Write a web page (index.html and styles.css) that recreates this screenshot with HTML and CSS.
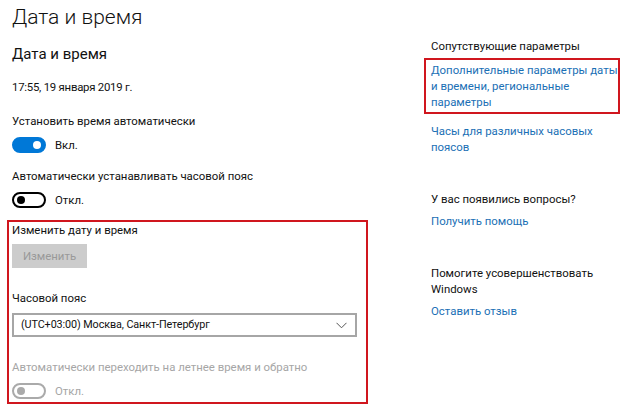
FILE: index.html
```html
<!DOCTYPE html>
<html lang="ru">
<head>
  <meta charset="UTF-8">
  <meta name="viewport" content="width=device-width, initial-scale=1.0">
  <title>Дата и время</title>
  <link rel="stylesheet" href="styles.css">
</head>
<body>
  <div class="page">
    <div class="main">
      <h1>Дата и время</h1>
      <h2>Дата и время</h2>
      <p class="now">17:55, 19 января 2019 г.</p>

      <p class="label first">Установить время автоматически</p>
      <div class="switch-row">
        <span class="switch on"></span>
        <span>Вкл.</span>
      </div>

      <p class="label">Автоматически устанавливать часовой пояс</p>
      <div class="switch-row">
        <span class="switch"></span>
        <span>Откл.</span>
      </div>

      <div class="marked">
        <p class="label top">Изменить дату и время</p>
        <button class="btn" disabled>Изменить</button>

        <p class="label zone">Часовой пояс</p>
        <div class="select">
          <span>(UTC+03:00) Москва, Санкт-Петербург</span>
          <svg width="11" height="7" viewBox="0 0 11 7"><polyline points="0.5,0.8 5.5,5.8 10.5,0.8" fill="none" stroke="#555" stroke-width="1"/></svg>
        </div>

        <p class="label zone muted">Автоматически переходить на летнее время и обратно</p>
        <div class="switch-row muted">
          <span class="switch off-disabled"></span>
          <span>Откл.</span>
        </div>
      </div>
    </div>

    <div class="side">
      <p class="side-title">Сопутствующие параметры</p>
      <div class="marked-link">
        <a href="#">Дополнительные параметры даты<br>и времени, региональные<br>параметры</a>
      </div>
      <a href="#" class="link-block">Часы для различных часовых<br>поясов</a>

      <p class="side-title q">У вас появились вопросы?</p>
      <a href="#" class="link-block single">Получить помощь</a>

      <p class="side-title q2">Помогите усовершенствовать<br>Windows</p>
      <a href="#" class="link-block single">Оставить отзыв</a>
    </div>
  </div>
</body>
</html>
```

FILE: styles.css
```css
body {
  margin: 0;
  font-family: Roboto, "Noto Sans", sans-serif;
  font-size: 11.4px;
  line-height: 16px;
  color: #111;
  background: #fff;
}
p {
  margin: 0;
}
.page {
  display: flex;
  padding: 3px 0 0 12px;
  white-space: nowrap;
}
.main {
  width: 345px;
}
h1 {
  margin: 0;
  font-size: 21px;
  font-weight: 300;
  line-height: 28px;
}
h2 {
  margin: 12px 0 0;
  font-size: 15px;
  font-weight: 400;
  line-height: 22px;
}
.now {
  margin-top: 14px;
  letter-spacing: -0.25px;
}
.label {
  margin-top: 15px;
}
.label.first {
  margin-top: 18px;
}
.switch-row {
  display: flex;
  align-items: center;
  gap: 9px;
  height: 16px;
  margin-top: 8px;
}
.switch {
  box-sizing: border-box;
  width: 34px;
  height: 16px;
  border: 2px solid #000;
  border-radius: 8px;
  position: relative;
}
.switch::after {
  content: "";
  position: absolute;
  top: 2px;
  left: 3px;
  width: 8px;
  height: 8px;
  border-radius: 50%;
  background: #000;
}
.switch.on {
  background: #0078d7;
  border-color: #0078d7;
}
.switch.on::after {
  left: auto;
  right: 3px;
  background: #fff;
}
.switch.off-disabled {
  border-color: #aaa;
}
.switch.off-disabled::after {
  background: #aaa;
}
.marked {
  margin: 12px -11px 0 -5px;
  padding: 0 9px 3px 3px;
  border: 2px solid #d0161e;
}
.label.top {
  margin-top: 0;
}
.btn {
  display: block;
  margin-top: 6px;
  width: 75px;
  height: 24px;
  border: none;
  background: #ccc;
  color: #999;
  font: inherit;
  padding: 0;
}
.label.zone {
  margin-top: 22px;
}
.select {
  box-sizing: border-box;
  display: flex;
  align-items: center;
  justify-content: space-between;
  margin-top: 7px;
  height: 24px;
  padding: 0 8px 0 7px;
  border: 2px solid #a6a6a6;
  font-size: 10.8px;
  letter-spacing: -0.1px;
}
.muted {
  color: #a6a6a6;
}
.side {
  margin-left: 74px;
  width: 185px;
}
.side-title {
  margin-top: 35px;
}
.marked-link {
  margin: 4px 0 0 -7px;
  padding: 2px 0 2px 5px;
  width: 187px;
  border: 2px solid #d0161e;
}
a {
  color: #1a6fb5;
  text-decoration: none;
}
.link-block {
  display: block;
  margin-top: 9px;
}
.side-title.q {
  margin-top: 36px;
}
.side-title.q2 {
  margin-top: 36px;
}
.link-block.single {
  margin-top: 6px;
}
```
